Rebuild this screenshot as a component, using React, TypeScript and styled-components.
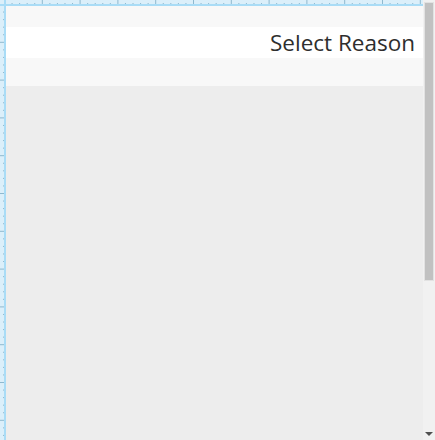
import React from 'react';
import styled, { createGlobalStyle } from 'styled-components';

const GlobalStyle = createGlobalStyle`
  html, body {
    margin: 0;
    padding: 0;
    overflow: hidden;
    background: #ffffff;
  }
`;

const CM = 37.8;
const STEP = CM / 5;

const Ruler = ({ length, vertical }: { length: number; vertical?: boolean }) => {
  const ticks = [];
  for (let i = 0; i * STEP < length + 8; i++) {
    const pos = -1.5 + i * STEP;
    const major = i % 5 === 0;
    const size = major ? 5 : 2;
    ticks.push(
      vertical ? (
        <line key={i} x1={5 - size} x2={5} y1={pos} y2={pos} />
      ) : (
        <line key={i} x1={pos} x2={pos} y1={5 - size} y2={5} />
      ),
    );
  }
  return vertical ? (
    <svg width={6} height={length}>
      <g stroke="#8fb9cf" strokeWidth={1}>{ticks}</g>
      <rect x={4} y={0} width={2} height={length} fill="#a9dcf6" />
    </svg>
  ) : (
    <svg width={length} height={6}>
      <g stroke="#8fb9cf" strokeWidth={1}>{ticks}</g>
      <rect x={0} y={4} width={length} height={2} fill="#a9dcf6" />
    </svg>
  );
};

export default function App() {
  return (
    <>
      <GlobalStyle />
      <Frame>
        <Workspace>
          <Corner />
          <TopRuler>
            <Ruler length={417} />
          </TopRuler>
          <LeftRuler>
            <Ruler length={434} vertical />
          </LeftRuler>
          <Canvas>
            <Band />
            <TitleRow>
              <Title>Select Reason</Title>
            </TitleRow>
            <Band $tall />
            <Body />
          </Canvas>
        </Workspace>
        <ScrollTrack>
          <Thumb />
          <ArrowDown />
        </ScrollTrack>
      </Frame>
    </>
  );
}

const Frame = styled.div`
  display: grid;
  grid-template-columns: 1fr 12px;
  width: 435px;
  height: 440px;
`;

const Workspace = styled.div`
  display: grid;
  grid-template-columns: 6px 1fr;
  grid-template-rows: 6px 1fr;
  min-height: 0;
  overflow: hidden;
`;

const Corner = styled.div`
  background: #dbeffa;
  border-right: 2px solid #a9dcf6;
  border-bottom: 2px solid #a9dcf6;
  box-sizing: border-box;
`;

const TopRuler = styled.div`
  background: #dbeffa;
  overflow: hidden;
  line-height: 0;
`;

const LeftRuler = styled.div`
  background: #dbeffa;
  overflow: hidden;
  line-height: 0;
`;

const Canvas = styled.div`
  display: flex;
  flex-direction: column;
  background: #ededed;
  min-height: 0;
`;

const Band = styled.div<{ $tall?: boolean }>`
  height: ${(p) => (p.$tall ? 28 : 21)}px;
  background: #f8f8f8;
`;

const TitleRow = styled.div`
  display: flex;
  justify-content: flex-end;
  align-items: center;
  height: 31px;
  padding-right: 8px;
  background: #ffffff;
`;

const Title = styled.h1`
  margin: 0;
  font-family: 'Open Sans', 'Noto Sans', sans-serif;
  font-weight: 400;
  font-size: 22.5px;
  line-height: 31px;
  color: #2e2e2e;
`;

const Body = styled.div`
  flex: 1;
  background: #ededed;
`;

const ScrollTrack = styled.div`
  display: flex;
  flex-direction: column;
  justify-content: space-between;
  align-items: flex-start;
  background: #f1f1f1;
  padding: 2px 0 4px 1px;
  box-sizing: border-box;
`;

const Thumb = styled.div`
  width: 10px;
  height: 279px;
  background: #c1c1c1;
  box-shadow: 0 0 0 1px #e2e2e2 inset;
`;

const ArrowDown = styled.div`
  margin-left: 1px;
  width: 0;
  height: 0;
  border-left: 4px solid transparent;
  border-right: 4px solid transparent;
  border-top: 4px solid #505050;
`;
